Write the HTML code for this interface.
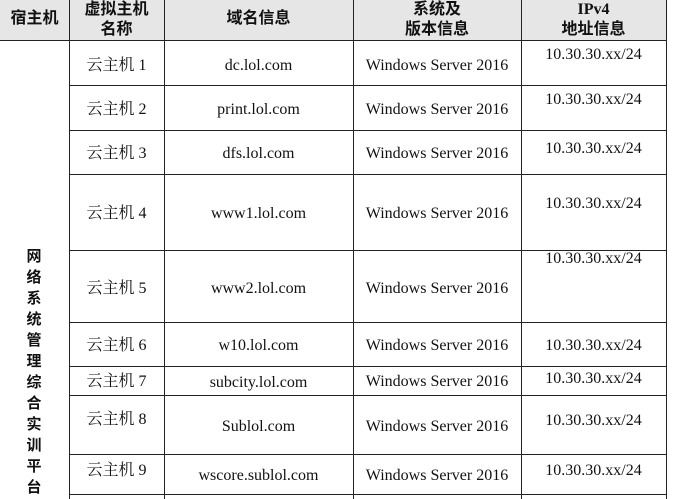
<!DOCTYPE html>
<html><head><meta charset="utf-8"><style>
body{margin:0;width:681px;height:499px;background:#fff;position:relative;overflow:hidden;font-family:"Liberation Serif","Noto Serif CJK SC",serif;color:#111}
.h{position:absolute;top:0;height:40px;background:#e6e6e6}
.vl{position:absolute;top:0;bottom:0;width:1px;background:#222}
.hl{position:absolute;left:69px;width:598px;height:1px;background:#222}
.t{position:absolute;font-size:16px;text-align:center;line-height:18px;white-space:nowrap;margin-top:2px}
.b{position:absolute;font-family:"Liberation Sans","Noto Sans CJK SC",sans-serif;font-weight:bold;font-size:16px;text-align:center;line-height:20px}
.v{position:absolute;left:23px;width:22px;font-family:"Liberation Sans","Noto Sans CJK SC",sans-serif;font-weight:bold;font-size:15px;text-align:center;line-height:21px}
</style></head><body>
<div class="h" style="left:0;width:667px"></div>
<div class="hl" style="left:0;width:667px;top:40px"></div>
<div class="vl" style="left:69px"></div>
<div class="vl" style="left:164px"></div>
<div class="vl" style="left:353px"></div>
<div class="vl" style="left:521px"></div>
<div class="vl" style="left:666px"></div>
<div class="hl" style="top:85px"></div>
<div class="hl" style="top:130px"></div>
<div class="hl" style="top:174px"></div>
<div class="hl" style="top:250px"></div>
<div class="hl" style="top:322px"></div>
<div class="hl" style="top:366px"></div>
<div class="hl" style="top:395px"></div>
<div class="hl" style="top:454px"></div>
<div class="hl" style="top:494px"></div>
<div class="b" style="left:0;width:69px;top:9px">宿主机</div>
<div class="b" style="left:69px;width:95px;top:0px">虚拟主机<br>名称</div>
<div class="b" style="left:164px;width:189px;top:9px">域名信息</div>
<div class="b" style="left:353px;width:168px;top:0px">系统及<br>版本信息</div>
<div class="b" style="left:521px;width:145px;top:0px"><span style="font-family:'Liberation Serif',serif">IPv4</span><br>地址信息</div>
<div class="v" style="top:246px">网<br>络<br>系<br>统<br>管<br>理<br>综<br>合<br>实<br>训<br>平<br>台</div>
<div class="t" style="left:69px;width:95px;top:55px">云主机 1</div>
<div class="t" style="left:164px;width:189px;top:55px">dc.lol.com</div>
<div class="t" style="left:353px;width:168px;top:55px">Windows Server 2016</div>
<div class="t" style="left:521px;width:145px;top:44px">10.30.30.xx/24</div>
<div class="t" style="left:69px;width:95px;top:99px">云主机 2</div>
<div class="t" style="left:164px;width:189px;top:99px">print.lol.com</div>
<div class="t" style="left:353px;width:168px;top:99px">Windows Server 2016</div>
<div class="t" style="left:521px;width:145px;top:89px">10.30.30.xx/24</div>
<div class="t" style="left:69px;width:95px;top:143px">云主机 3</div>
<div class="t" style="left:164px;width:189px;top:143px">dfs.lol.com</div>
<div class="t" style="left:353px;width:168px;top:143px">Windows Server 2016</div>
<div class="t" style="left:521px;width:145px;top:138px">10.30.30.xx/24</div>
<div class="t" style="left:69px;width:95px;top:203px">云主机 4</div>
<div class="t" style="left:164px;width:189px;top:203px">www1.lol.com</div>
<div class="t" style="left:353px;width:168px;top:203px">Windows Server 2016</div>
<div class="t" style="left:521px;width:145px;top:193px">10.30.30.xx/24</div>
<div class="t" style="left:69px;width:95px;top:278px">云主机 5</div>
<div class="t" style="left:164px;width:189px;top:278px">www2.lol.com</div>
<div class="t" style="left:353px;width:168px;top:278px">Windows Server 2016</div>
<div class="t" style="left:521px;width:145px;top:248px">10.30.30.xx/24</div>
<div class="t" style="left:69px;width:95px;top:335px">云主机 6</div>
<div class="t" style="left:164px;width:189px;top:335px">w10.lol.com</div>
<div class="t" style="left:353px;width:168px;top:335px">Windows Server 2016</div>
<div class="t" style="left:521px;width:145px;top:335px">10.30.30.xx/24</div>
<div class="t" style="left:69px;width:95px;top:371px">云主机 7</div>
<div class="t" style="left:164px;width:189px;top:372px">subcity.lol.com</div>
<div class="t" style="left:353px;width:168px;top:371px">Windows Server 2016</div>
<div class="t" style="left:521px;width:145px;top:368px">10.30.30.xx/24</div>
<div class="t" style="left:69px;width:95px;top:409px">云主机 8</div>
<div class="t" style="left:164px;width:189px;top:416px">Sublol.com</div>
<div class="t" style="left:353px;width:168px;top:416px">Windows Server 2016</div>
<div class="t" style="left:521px;width:145px;top:410px">10.30.30.xx/24</div>
<div class="t" style="left:69px;width:95px;top:460px">云主机 9</div>
<div class="t" style="left:164px;width:189px;top:465px">wscore.sublol.com</div>
<div class="t" style="left:353px;width:168px;top:465px">Windows Server 2016</div>
<div class="t" style="left:521px;width:145px;top:460px">10.30.30.xx/24</div>
</body></html>
